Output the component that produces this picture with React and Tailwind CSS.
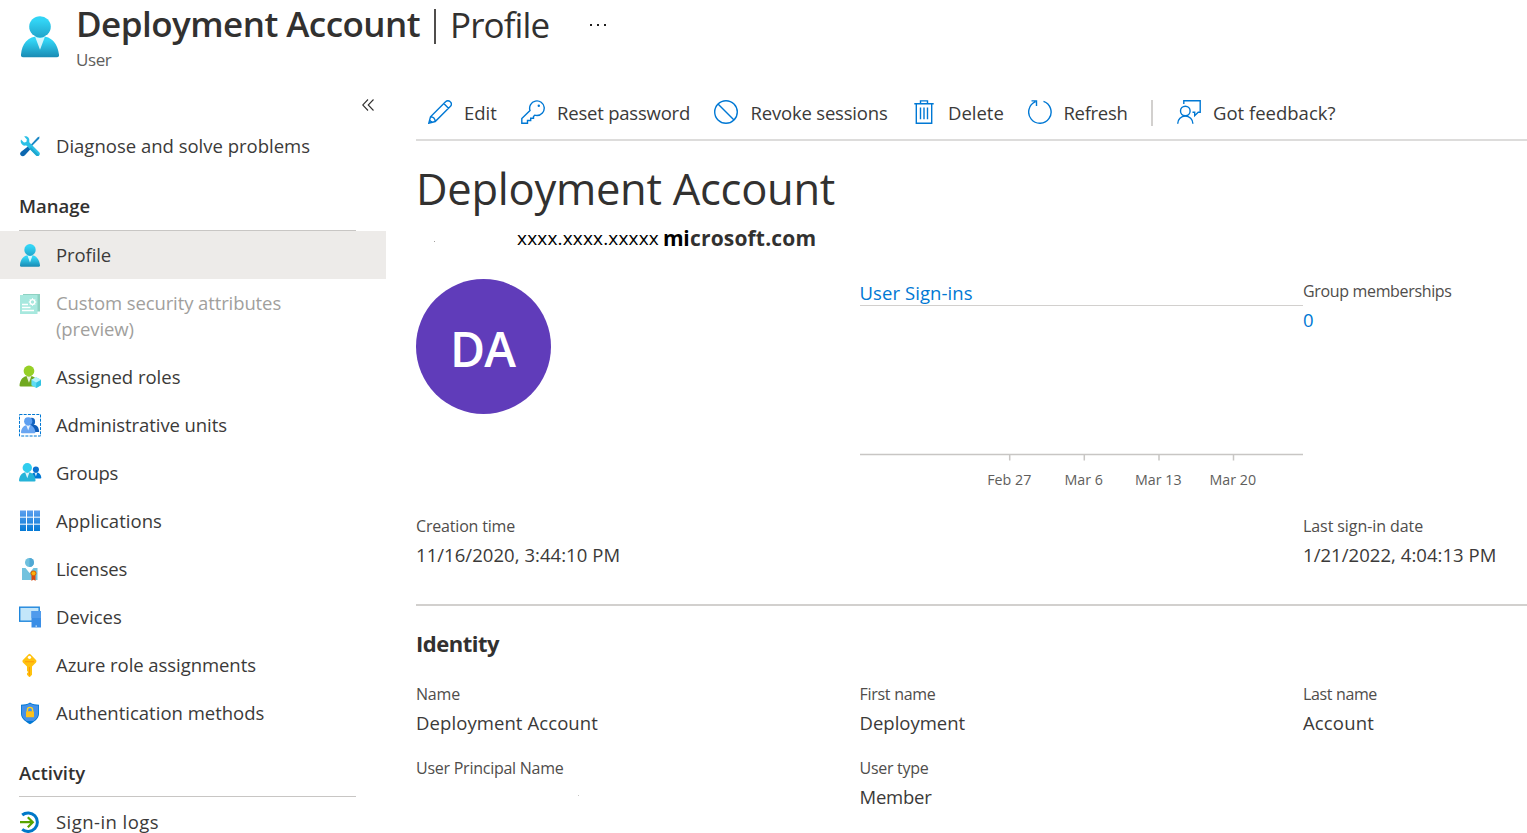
import React from "react";

function PersonIcon({ className, id = "p" }) {
  return (
    <svg viewBox="0 0 38 43" className={className} preserveAspectRatio="none">
      <defs>
        <linearGradient id={id + "b"} x1="0" y1="0" x2="0" y2="1">
          <stop offset="0.2" stopColor="#32d4f5" />
          <stop offset="1" stopColor="#198ab3" />
        </linearGradient>
        <linearGradient id={id + "h"} x1="0" y1="0" x2="0" y2="1">
          <stop offset="0.2" stopColor="#32d4f5" />
          <stop offset="1" stopColor="#22a5cb" />
        </linearGradient>
      </defs>
      <path d="M35.5 42.3A2.5 2.5 0 0 0 38 39.5C37 30 32 20.5 19 20.5S1 29 0 39.5a2.5 2.5 0 0 0 2.5 2.8z" fill={`url(#${id}b)`} />
      <path d="M19 22.5a10 10 0 0 1-5-1.6l5 13.6 5-13.5a10 10 0 0 1-5 1.5z" fill="#fff" opacity="0.8" />
      <circle cx="19" cy="11" r="10.8" fill={`url(#${id}h)`} />
    </svg>
  );
}

function Person({ x, y, s, head, body }) {
  return (
    <g transform={`translate(${x} ${y}) scale(${s})`}>
      <path d="M16.8 20A1.2 1.2 0 0 0 18 18.7C17.5 14 15 9.7 9 9.7S.5 14 0 18.7A1.2 1.2 0 0 0 1.2 20z" fill={body} />
      <path d="M9 10.5L6.6 10l2.4 6.5L11.4 10z" fill="#fff" opacity="0.85" />
      <circle cx="9" cy="5.2" r="5.1" fill={head} />
    </g>
  );
}

const icons = {
  diagnose: (
    <>
      <path d="M20.5 1.5l-1.8.7-7.2 7.9 1.2 1.2 7.5-7.6z" fill="#1a86c4" />
      <path d="M9.2 11.2l2.6 2.6-5.9 6.5c-1.3 1.3-2.8 1.3-4 .2s-1-2.6.2-3.7z" fill="#0c68b0" />
      <path d="M2 4.6l3 2.9 2.3-.6.6-2.3L5.2 1.5c2.6-.8 5.6 1.1 5.1 4.6 0 .6-.1 1 .2 1.4l9.5 9.5c1.4 1.4.9 2.8.1 3.5-.9.8-2.3.8-3.3-.3L7.7 10.8c-.5-.4-1-.3-1.6-.2C3 11 .9 7.6 2 4.6z" fill="#2bc0e6" />
      <path d="M12 12.3l8 7.7c-.8 1.2-2 1.2-3.2.2l-6.7-6.8z" fill="#20a7cf" />
    </>
  ),
  custom: (
    <g opacity="0.62">
      <path d="M4 1h17v17.500h-3V3H4z" fill="#4ab79d" />
      <path d="M1 2h17.500v19H1z" fill="#72dbca" />
      <path d="M3 11.500h6M3 14.500h8.500M3 17.500h12" stroke="#fff" strokeWidth="1.5" />
      <circle cx="13.5" cy="9" r="2.4" fill="none" stroke="#fff" strokeWidth="1.4" />
      <path d="M13.5 5.200v1.500m0 4.600v1.500M9.700 9h1.500m4.600 0h1.500M10.900 6.400l1 1m3.200 3.200l1 1m0-5.200l-1 1m-3.200 3.200l-1 1" stroke="#fff" strokeWidth="1" />
    </g>
  ),
  roles: (
    <>
      <Person x={0.5} y={-0.5} s={1.05} head="#96cf26" body="#70a91f" />
      <path d="M17.2 11.200l4.800 2.600v5.500L17.200 22l-4.800-2.700v-5.500z" fill="#5fdcf3" />
      <path d="M17.200 16.500L22 13.800v5.500L17.200 22z" fill="#32c3e2" />
      <path d="M12.400 13.800l4.800-2.600 4.800 2.600-4.800 2.700z" fill="#b4f1fb" />
    </>
  ),
  admin: (
    <>
      <rect x="0.5" y="0.5" width="21" height="21.5" fill="none" stroke="#0078d4" strokeWidth="1" strokeDasharray="3 1.2" />
      <g transform="translate(9 4) scale(.62 .7)">
        <path d="M18 20C17.500 14 15 9.700 9 9.700S.5 14 0 20z" fill="#0f5cb8" />
        <circle cx="6" cy="5.200" r="5.400" fill="#1565c0" />
      </g>
      <Person x={2} y={3.2} s={0.8} head="#5e9ff0" body="#6aa6f2" />
    </>
  ),
  groups: (
    <>
      <Person x={11.5} y={4.5} s={0.6} head="#0a6fcf" body="#0078d4" />
      <Person x={0} y={1} s={0.92} head="#30cdee" body="#25b3d8" />
    </>
  ),
  apps: (
    <>
      <defs>
        <linearGradient id="ap" x1="0" y1="0" x2="0" y2="22" gradientUnits="userSpaceOnUse">
          <stop stopColor="#5ea0ef" />
          <stop offset="1" stopColor="#0078d4" />
        </linearGradient>
      </defs>
      <path d="M1 .5h6v20.500H1zM8 .5h6v20.500H8zM15 .5h6v20.500h-6z" fill="url(#ap)" />
      <path d="M1 6.500h20v1.500H1zM1 13.500h20v1.500H1z" fill="#fff" opacity="0.65" />
    </>
  ),
  licenses: (
    <>
      <circle cx="10.5" cy="4.5" r="4.5" fill="#6fc0de" />
      <path d="M10.500 0a4.500 4.500 0 0 1 0 9z" fill="#50a8d4" />
      <path d="M3 10h3.500l4 5 4-5H18.500V22H3z" fill="#72c2de" />
      <path d="M12.500 17.500h4V23l-2-1.500-2 1.500z" fill="#d9480f" />
      <circle cx="14.5" cy="15.300" r="2.900" fill="#d9650a" />
      <circle cx="14.5" cy="15.300" r="1.900" fill="#fbb20a" />
    </>
  ),
  devices: (
    <>
      <rect x="0.7" y="1.200" width="19.500" height="14" fill="#c3e6fa" stroke="#1e86dc" strokeWidth="1.4" />
      <path d="M12.500 5h9.500v16.500h-9.500z" fill="#3a8ee6" />
      <path d="M12.500 5h9.500v7h-9.500z" fill="#4f9bec" />
      <rect x="16.5" y="19.500" width="1.5" height="1.2" fill="#d6eafc" />
    </>
  ),
  key: (
    <>
      <path d="M11.400.2L17 6c.6.700.6 1.700 0 2.400L13 12.500v8.300l-2.100 2.200h-.8L8 20.800v-1.500l1.300-1.200L8 16.900v-4.400L3.900 8.400c-.6-.7-.6-1.700 0-2.400L9.600.2a1.300 1.300 0 0 1 1.800 0z" fill="#ffc20f" />
      <path d="M9.900 13h1.100v8.500H9.900z" fill="#ff9c00" />
      <path d="M6 7h9v1.300H6z" fill="#ffa20a" />
      <circle cx="10.5" cy="3.300" r="1.600" fill="#fff" />
    </>
  ),
  shield: (
    <>
      <path d="M11 .5c3 1.900 5.500 2.200 9 2.200v9c0 5-5.500 8.500-9 10.500-3.500-2-9-5.500-9-10.500v-9c3.500 0 6-.3 9-2.200z" fill="#0078d4" />
      <path d="M11 1.500c3 1.700 5.300 2 8.200 2v8c0 3-2.200 5.500-4.700 7.500h-7C5 17 2.800 14.500 2.800 11.500v-8c2.900 0 5.200-.3 8.200-2z" fill="#4591e8" />
      <path d="M8.400 9.500V8a2.600 2.600 0 0 1 5.200 0v1.500" fill="none" stroke="#ffd21f" strokeWidth="1.4" />
      <rect x="7" y="9.300" width="8" height="6" rx="0.6" fill="#ffc21a" />
    </>
  ),
  signin: (
    <>
      <path d="M3.200 4A9.300 9.300 0 1 1 3.200 18.400" fill="none" stroke="#0078c8" strokeWidth="3" />
      <path d="M1 11.200h12.500M8.800 6.200l5 5-5 5" fill="none" stroke="#57a300" strokeWidth="2.200" />
    </>
  ),
};

function NavRow({ icon, tracking = "", top = "", children, cls = "h-[48px] items-center" }) {
  return (
    <div className={`flex shrink-0 ${cls}`}>
      <div className={`ml-[19px] w-[37px] shrink-0 ${top}`}>
        {icon === "profile" ? (
          <PersonIcon id="n" className="ml-px h-[23px] w-[20px]" />
        ) : (
          <svg viewBox="0 0 22 22" className="h-[22px] w-[22px] overflow-visible">{icons[icon]}</svg>
        )}
      </div>
      <span className={`text-[18.5px] leading-[26px] ${tracking}`}>{children}</span>
    </div>
  );
}

function Command({ width, gap, tracking, label, children }) {
  return (
    <div className={`flex shrink-0 items-center ${width}`}>
      <svg viewBox="0 0 24 24" className={`-mt-px h-[24px] w-[24px] shrink-0 ${gap}`} fill="none" stroke="#0078d4" strokeWidth="1.4">
        {children}
      </svg>
      <span className={`text-[18.5px] leading-[26px] whitespace-nowrap ${tracking}`}>{label}</span>
    </div>
  );
}

function Field({ label, value, lt = "", vt = "", link }) {
  return (
    <div className="flex flex-col whitespace-nowrap">
      <span className={`h-[20px] overflow-hidden text-[16px] leading-[20px] text-[#4f4d4b] ${lt}`}>{label}</span>
      <span className={`mt-[6px] h-[26px] text-[18.5px] leading-[26px] ${link ? "text-[#0078d4]" : ""} ${vt}`}>{value}</span>
    </div>
  );
}

const cols = "grid grid-cols-[443.5px_443.5px_1fr]";

export default function App() {
  return (
    <div className="flex h-[833px] w-[1527px] flex-col overflow-hidden bg-white font-['Open_Sans','Noto_Sans',sans-serif] text-[#3b3a39]">
      <header className="flex h-[86px] shrink-0 pl-[21px]">
        <PersonIcon id="t" className="mt-[16px] h-[42px] w-[38px]" />
        <div className="ml-[17px] flex flex-col">
          <div className="flex h-[48px] items-center text-[35px] leading-[48px] whitespace-nowrap text-[#323130]">
            <h1 className="w-[358px] font-semibold tracking-[-0.54px]">Deployment Account</h1>
            <div className="mt-[4px] h-[35px] w-[2px] bg-[#504e4c]" />
            <span className="ml-[14px] w-[140px] pt-px tracking-[-0.9px]">Profile</span>
            <div className="flex gap-[5px] pt-px">
              <i className="size-[2px] bg-[#201f1e]" />
              <i className="size-[2px] bg-[#201f1e]" />
              <i className="size-[2px] bg-[#201f1e]" />
            </div>
          </div>
          <span className="text-[17px] leading-[24px] tracking-[-0.4px] text-[#605e5c]">User</span>
        </div>
      </header>

      <div className="flex min-h-0 flex-1">
        <nav className="flex w-[386px] shrink-0 flex-col overflow-hidden">
          <div className="flex h-[36px] shrink-0 items-center justify-end pr-[12px]">
            <svg viewBox="0 0 12 12" className="mt-[2px] h-[12px] w-[12px]" fill="none" stroke="#323130" strokeWidth="1.1">
              <path d="M6 .5L.7 6 6 11.500M11.500.5L6.200 6l5.300 5.500" />
            </svg>
          </div>
          <NavRow icon="diagnose">Diagnose and solve problems</NavRow>
          <h2 className="mr-[30px] ml-[19px] flex h-[61px] shrink-0 items-end border-b border-[#c8c6c4] pb-[11px] text-[18.5px] leading-[26px] font-semibold text-[#323130]">Manage</h2>
          <NavRow icon="profile" cls="h-[48px] items-center bg-[#edebe9]" tracking="tracking-[-0.1px]">Profile</NavRow>
          <NavRow icon="custom" cls="h-[74px] pt-[11px] text-[#a19f9d]" top="mt-[3px]" tracking="w-[240px] tracking-[-0.11px]">Custom security attributes (preview)</NavRow>
          <NavRow icon="roles">Assigned roles</NavRow>
          <NavRow icon="admin" tracking="tracking-[-0.08px]">Administrative units</NavRow>
          <NavRow icon="groups" tracking="tracking-[-0.25px]">Groups</NavRow>
          <NavRow icon="apps" tracking="tracking-[0.05px]">Applications</NavRow>
          <NavRow icon="licenses" tracking="tracking-[-0.25px]">Licenses</NavRow>
          <NavRow icon="devices">Devices</NavRow>
          <NavRow icon="key" tracking="tracking-[-0.06px]">Azure role assignments</NavRow>
          <NavRow icon="shield">Authentication methods</NavRow>
          <h2 className="mr-[30px] mb-px ml-[19px] flex h-[60px] shrink-0 items-end border-b border-[#c8c6c4] pb-[10px] text-[18.5px] leading-[26px] font-semibold text-[#323130]">Activity</h2>
          <NavRow icon="signin" tracking="tracking-[0.45px]">Sign-in logs</NavRow>
        </nav>

        <main className="ml-[30px] flex w-[1111px] flex-col">
          <div className="flex h-[55px] shrink-0 items-center border-b-2 border-[#dddcdb] pl-[12px]">
            <Command label="Edit" width="w-[93px]" gap="mr-[12px]" tracking="">
              <path d="M.8 23.200L2.500 16.800 17.800 1.600a2.900 2.900 0 0 1 4.200 0l.5.500a2.900 2.900 0 0 1 0 4.200L7.200 21.500zM15.800 3.600l4.700 4.700M2.500 16.800a5 5 0 0 1 4.700 4.700M1.500 20l2.500 2.500" />
            </Command>
            <Command label="Reset password" width="w-[193px]" gap="mr-[12px]" tracking="tracking-[-0.21px]">
              <path d="M.8 23.200v-4.700L9 10.500A7.300 7.300 0 1 1 16 15.500c-.8 0-1.600-.1-2.300-.3L12.500 16.500v1.700H9.700V20.500H6.500v2.700z" />
              <circle cx="17.8" cy="5.8" r="1.2" fill="#0078d4" stroke="none" />
            </Command>
            <Command label="Revoke sessions" width="w-[198px]" gap="mr-[12.5px]" tracking="tracking-[-0.19px]">
              <circle cx="12" cy="12" r="11.3" />
              <path d="M4 4l16 16" />
            </Command>
            <Command label="Delete" width="w-[116px]" gap="mr-[12px]" tracking="">
              <path d="M2.300 3.700h19.400M8.500 3.500V.9h7v2.600M4.300 4v19.200h15.400V4M8.500 7.500v11.700M12 7.500v11.700M15.500 7.500v11.700" />
            </Command>
            <Command label="Refresh" width="w-[123px]" gap="mr-[11.5px]" tracking="tracking-[-0.31px]">
              <path d="M15.500 1.400A11.200 11.200 0 1 1 7.500 1.700M3.500.9h5v5.200" />
            </Command>
            <div className="mr-[24px] h-[26px] w-[2px] bg-[#d2d0ce]" />
            <Command label="Got feedback?" width="w-[170px]" gap="mr-[12px]" tracking="">
              <circle cx="8.3" cy="11" r="4.8" />
              <path d="M.7 23.700a7.600 7.600 0 0 1 15.200 0M6.800 4V.8h16.400v11.500h-2l-3.500 3.400v-3.400h-2.200" />
            </Command>
          </div>

          <h2 className="mt-[18px] h-[60px] shrink-0 text-[43.5px] leading-[60px] tracking-[-0.27px] text-[#323130]">Deployment Account</h2>

          <div className="mt-[5px] flex h-[28px] shrink-0 items-center pl-[18px] leading-[28px] whitespace-nowrap">
            <i className="mt-[6px] size-px bg-[#a19f9d]" />
            <span className="ml-[82px] w-[146px] text-[19px] tracking-[0.18px] text-black">xxxx.xxxx.xxxxx</span>
            <span className="w-[27px] text-[21px] font-bold tracking-[-0.4px] text-black">mi</span>
            <span className="text-[21px] font-bold tracking-[0.16px] text-[#323130]">crosoft.com</span>
          </div>

          <section className={`mt-[27px] h-[237px] shrink-0 ${cols}`}>
            <div className="flex size-[135px] items-center justify-center rounded-full bg-[#603cba]">
              <span className="pt-[4px] pr-[2px] text-[48px] leading-[60px] font-semibold tracking-[-0.96px] text-white">DA</span>
            </div>
            <div className="flex flex-col">
              <div className="mt-[2px] h-[25px] border-b border-[#d2d0ce] text-[18.5px] leading-[24px] tracking-[0.08px] text-[#0078d4]">User Sign-ins</div>
              <svg viewBox="0 0 443.5 156" className="h-[156px] w-[443.5px] shrink-0" stroke="#c8c6c4" strokeWidth="1.5">
                <path d="M0 148.500H443.500M149.700 148.500v6M224.300 148.500v6M299 148.500v6M373.500 148.500v6" fill="none" />
              </svg>
              <div className="mt-[8px] ml-[112.5px] flex text-[14.25px] leading-[20px] text-[#605e5c]">
                <span className="w-[74.5px] text-center">Feb 27</span>
                <span className="w-[74.5px] text-center">Mar 6</span>
                <span className="w-[74.5px] text-center">Mar 13</span>
                <span className="w-[74.5px] text-center">Mar 20</span>
              </div>
            </div>
            <div className="pt-[2px]">
              <Field label="Group memberships" value="0" lt="tracking-[-0.34px]" link />
            </div>
          </section>

          <section className={`h-[88px] shrink-0 ${cols}`}>
            <Field label="Creation time" value="11/16/2020, 3:44:10 PM" lt="tracking-[-0.18px]" vt="tracking-[0.05px]" />
            <div />
            <Field label="Last sign-in date" value="1/21/2022, 4:04:13 PM" lt="tracking-[-0.08px]" vt="tracking-[0.05px]" />
          </section>

          <section className="flex shrink-0 flex-col border-t-2 border-[#d2d0ce]">
            <h3 className="mt-[22px] text-[22px] leading-[30px] font-bold tracking-[-0.5px] text-[#323130]">Identity</h3>
            <div className={`mt-[26px] h-[74px] ${cols}`}>
              <Field label="Name" value="Deployment Account" lt="tracking-[-0.18px]" vt="tracking-[0.09px]" />
              <Field label="First name" value="Deployment" lt="tracking-[-0.28px]" />
              <Field label="Last name" value="Account" lt="tracking-[-0.36px]" vt="tracking-[0.15px]" />
            </div>
            <div className={cols}>
              <div className="flex flex-col items-start">
                <Field label="User Principal Name" value="" lt="tracking-[-0.25px]" />
                <i className="-mt-[15px] ml-[162px] size-px bg-[#c8c6c4]" />
              </div>
              <Field label="User type" value="Member" lt="tracking-[-0.27px]" vt="tracking-[-0.24px]" />
            </div>
          </section>
        </main>
      </div>
    </div>
  );
}
